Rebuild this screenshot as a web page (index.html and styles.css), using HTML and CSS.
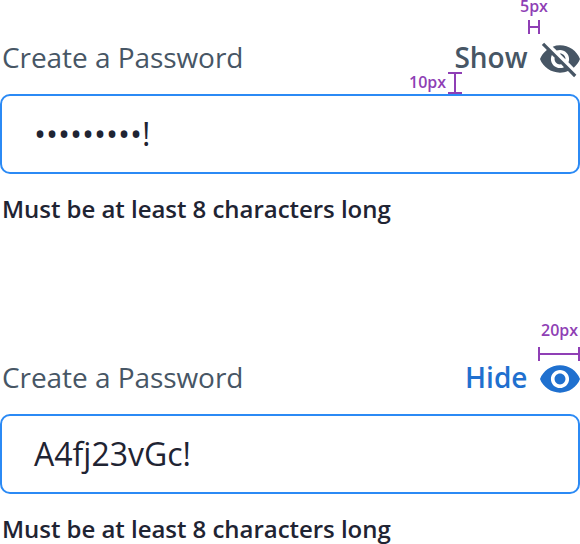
FILE: index.html
```html
<!DOCTYPE html>
<html lang="en">
<head>
<meta charset="utf-8">
<title>Password field</title>
<link rel="stylesheet" href="styles.css">
</head>
<body>
<main class="spec">
  <section class="field">
    <div class="field-head">
      <span class="label">Create a Password</span>
      <span class="toggle toggle-show"><span class="toggle-text">Show</span>
        <svg class="icon" width="40" height="40" viewBox="1 1 22 22"><path fill="currentColor" d="M12 7c2.76 0 5 2.24 5 5 0 .65-.13 1.26-.36 1.83l2.92 2.92c1.51-1.26 2.7-2.89 3.43-4.75-1.73-4.39-6-7.5-11-7.5-1.4 0-2.74.25-3.98.7l2.16 2.16C10.74 7.13 11.35 7 12 7zM2 4.27l2.28 2.28.46.46C3.08 8.3 1.78 10.02 1 12c1.73 4.39 6 7.5 11 7.5 1.55 0 3.03-.3 4.38-.84l.42.42L19.73 22 21 20.73 3.27 3 2 4.27zM7.53 9.8l1.55 1.55c-.05.21-.08.43-.08.65 0 1.66 1.34 3 3 3 .22 0 .44-.03.65-.08l1.55 1.55c-.67.33-1.41.53-2.2.53-2.76 0-5-2.24-5-5 0-.79.2-1.53.53-2.2zm4.31-.78l3.15 3.15.02-.16c0-1.66-1.34-3-3-3l-.17.01z"/></svg>
      </span>
    </div>
    <div class="input"><span class="dots">•••••••••</span>!</div>
    <p class="hint">Must be at least 8 characters long</p>
    <span class="note note-gap">5px</span>
    <svg class="mark mark-gap" width="12" height="14"><path d="M1 0V14M11 0V14M1 7H11"/></svg>
    <span class="note note-space">10px</span>
    <svg class="mark mark-space" width="14" height="22"><path d="M0 1H14M0 21H14M7 1V21"/></svg>
  </section>
  <section class="field">
    <div class="field-head">
      <span class="label">Create a Password</span>
      <span class="toggle toggle-hide"><span class="toggle-text">Hide</span>
        <svg class="icon" width="40" height="40" viewBox="1 1 22 22"><path fill="currentColor" d="M12 4.5C7 4.5 2.73 7.61 1 12c1.73 4.39 6 7.5 11 7.5s9.27-3.11 11-7.5c-1.73-4.39-6-7.5-11-7.5zM12 17c-2.76 0-5-2.24-5-5s2.24-5 5-5 5 2.24 5 5-2.24 5-5 5zm0-8c-1.66 0-3 1.34-3 3s1.34 3 3 3 3-1.34 3-3-1.34-3-3-3z"/></svg>
      </span>
    </div>
    <div class="input">A4fj23vGc!</div>
    <p class="hint">Must be at least 8 characters long</p>
    <span class="note note-icon">20px</span>
    <svg class="mark mark-icon" width="42" height="14"><path d="M1 0V14M41 0V14M1 7H41"/></svg>
  </section>
</main>
</body>
</html>
```

FILE: styles.css
```css
* { box-sizing: border-box; }
body {
  margin: 0;
  background: #fff;
  color: #1f2433;
  font-family: "Open Sans", "Noto Sans", sans-serif;
}
.spec { height: 544px; overflow: hidden; }
.field { position: relative; height: 320px; padding-top: 37px; }
.field-head {
  display: flex;
  justify-content: space-between;
  height: 57px;
  padding-left: 2px;
  color: #475665;
  font-size: 28px;
  line-height: 40px;
}
.label { letter-spacing: -0.06px; white-space: nowrap; }
.toggle { display: flex; gap: 12.5px; font-weight: 600; }
.toggle-hide { color: #1f70cf; }
.icon { display: block; margin-top: 2px; }
.input {
  display: flex;
  align-items: center;
  height: 80px;
  padding-left: 32px;
  border: 2px solid #2b8af5;
  border-radius: 10px;
  font-size: 32px;
  line-height: 44px;
}
.dots { letter-spacing: -0.04px; }
.hint {
  margin: 18px 0 0 2px;
  font-size: 24px;
  font-weight: 600;
  letter-spacing: -0.04px;
  line-height: 34px;
  white-space: nowrap;
}
.note {
  position: absolute;
  color: #8f3fb5;
  font-size: 16px;
  font-weight: 600;
  line-height: 16px;
}
.note-gap { left: 520px; top: -2px; }
.note-space { left: 409px; top: 74px; }
.note-icon { left: 541px; top: 2px; }
.mark { position: absolute; fill: none; stroke: #8f3fb5; stroke-width: 2; }
.mark-gap { left: 528px; top: 20px; }
.mark-space { left: 448px; top: 72px; }
.mark-icon { left: 538px; top: 27px; }
```
